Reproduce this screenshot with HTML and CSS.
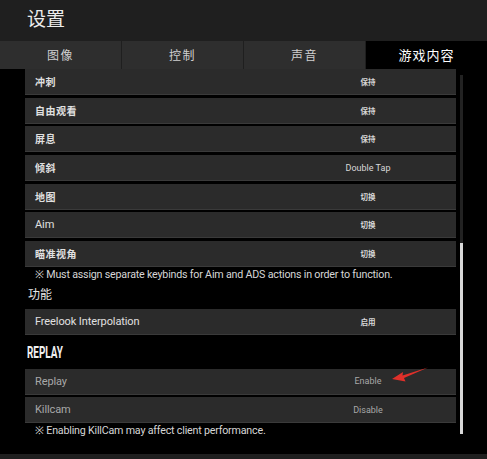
FILE: index.html
```html
<!DOCTYPE html>
<html lang="zh">

<head>
    <meta charset="UTF-8">
    <meta name="viewport" content="width=device-width, initial-scale=1.0">
    <title>设置</title>
    <link rel="stylesheet" href="styles.css">
</head>

<body>
    <div class="window">
        <div class="header">设置</div>

        <!-- Tabs -->
        <div class="tabs">
            <div class="tab">图像</div>
            <div class="tab">控制</div>
            <div class="tab">声音</div>
            <div class="tab active">游戏内容</div>
        </div>

        <div class="content">
            <div class="list">
                <div class="row"><span class="label">冲刺</span><span class="value cjk">保持</span></div>
                <div class="row"><span class="label">自由观看</span><span class="value cjk">保持</span></div>
                <div class="row"><span class="label">屏息</span><span class="value cjk">保持</span></div>
                <div class="row"><span class="label">倾斜</span><span class="value">Double Tap</span></div>
                <div class="row"><span class="label">地图</span><span class="value cjk">切换</span></div>
                <div class="row"><span class="label latin">Aim</span><span class="value cjk">切换</span></div>
                <div class="row"><span class="label">瞄准视角</span><span class="value cjk">切换</span></div>
                <div class="note">※ Must assign separate keybinds for Aim and ADS actions in order to function.</div>

                <div class="section">功能</div>
                <div class="row"><span class="label latin">Freelook Interpolation</span><span class="value cjk">启用</span></div>

                <div class="section replay"><span>REPLAY</span></div>
                <div class="row dim">
                    <span class="label latin">Replay</span><span class="value">Enable</span>
                    <svg class="arrow" width="40" height="16" viewBox="0 0 40 16">
                        <path d="M0 12 L11 5 L10.5 8.5 L36 0.5 L12 11 L13.5 14.5 Z" fill="#e0302a" />
                    </svg>
                </div>
                <div class="row dim"><span class="label latin">Killcam</span><span class="value">Disable</span></div>
                <div class="note">※ Enabling KillCam may affect client performance.</div>
            </div>

            <div class="scrollbar">
                <div class="thumb"></div>
            </div>
        </div>

        <div class="footer"></div>
    </div>
</body>

</html>
```

FILE: styles.css
```css
body {
    margin: 0;
    padding: 0;
    background-color: #000;
    font-family: "Noto Sans CJK SC", Roboto, sans-serif;
    color: #e6e6e6;
}

.window {
    width: 487px;
    height: 459px;
    display: flex;
    flex-direction: column;
    overflow: hidden;
}

.header {
    height: 41px;
    background-color: #1f1f1f;
    padding-left: 27px;
    font-size: 19px;
    line-height: 36px;
    color: #ececec;
}

.tabs {
    display: flex;
    height: 28px;
    background-color: #1f1f1f;
}

.tab {
    flex: 1;
    margin-right: 1px;
    background-color: #2e2e2e;
    font-size: 12px;
    line-height: 28px;
    text-align: center;
    color: #d0d0d0;
    letter-spacing: 1.5px;
}

.tab.active {
    margin-right: 0;
    background-color: #000;
    color: #fff;
    font-size: 13px;
    letter-spacing: 1px;
}

.content {
    flex: 1;
    display: flex;
    background-color: #000;
}

.list {
    width: 431px;
    margin-left: 25px;
}

.row {
    position: relative;
    display: flex;
    align-items: center;
    height: 26px;
    margin-bottom: 2.7px;
    background-color: #2b2b2b;
    border-bottom: 1px solid #3a3a3a;
    box-sizing: border-box;
}

.label {
    width: 290px;
    padding-left: 10px;
    font-size: 10px;
    font-weight: bold;
    color: #e0e0e0;
    letter-spacing: 0.5px;
}

.label.latin {
    font-family: Roboto, sans-serif;
    font-weight: normal;
    font-size: 11px;
    letter-spacing: -0.1px;
}

.value {
    width: 86px;
    text-align: center;
    font-family: Roboto, sans-serif;
    font-size: 9px;
    color: #d8d8d8;
}

.value.cjk {
    font-family: "Noto Sans CJK SC", sans-serif;
    font-size: 7.5px;
    font-weight: bold;
}

.row.dim .label,
.row.dim .value {
    color: #a8a8a8;
}

.arrow {
    position: absolute;
    left: 367px;
    top: -2px;
}

.note {
    height: 13px;
    margin-top: -2px;
    padding-left: 10px;
    font-family: Roboto, sans-serif;
    font-size: 10.7px;
    line-height: 13px;
    letter-spacing: -0.2px;
    color: #d6d6d6;
    white-space: nowrap;
}

.section {
    height: 28px;
    padding-left: 3px;
    font-size: 12px;
    line-height: 26px;
    color: #e6e6e6;
}

.replay {
    height: 31px;
    line-height: 30px;
    padding-left: 2px;
}

.replay span {
    display: inline-block;
    font-family: Roboto, sans-serif;
    font-weight: bold;
    font-size: 16px;
    transform: scaleX(0.62);
    transform-origin: left center;
    color: #f0f0f0;
}

.scrollbar {
    width: 3px;
    margin-left: 4px;
    margin-top: 6px;
    height: 359px;
    background-color: #222;
    display: flex;
    flex-direction: column;
    justify-content: flex-end;
}

.thumb {
    height: 191px;
    background-color: #d8d8d8;
}

.footer {
    height: 5px;
    background-color: #1f1f1f;
}
```
